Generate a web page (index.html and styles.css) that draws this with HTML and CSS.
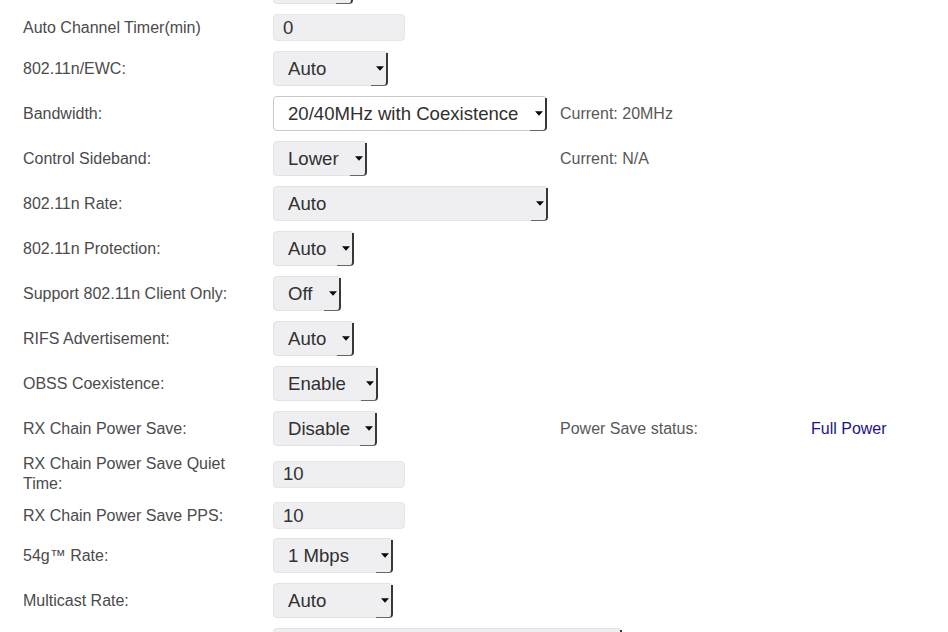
FILE: index.html
```html
<!DOCTYPE html>
<html lang="en">
<head>
<meta charset="utf-8">
<title>Wireless Advanced Settings</title>
<link rel="stylesheet" href="styles.css">
</head>
<body>
<form class="form">
  <div class="row">
    <label class="lbl"></label>
    <span class="sel w80"><select><option></option></select><svg class="arr" viewBox="0 0 7 4"><path d="M0 0H7L3.5 4Z"/></svg></span>
  </div>
  <div class="row">
    <label class="lbl">Auto Channel Timer(min)</label>
    <input class="txt" type="text" value="0">
  </div>
  <div class="row">
    <label class="lbl">802.11n/EWC:</label>
    <span class="sel w115"><select><option>Auto</option></select><svg class="arr" viewBox="0 0 7 4"><path d="M0 0H7L3.5 4Z"/></svg></span>
  </div>
  <div class="row">
    <label class="lbl">Bandwidth:</label>
    <span class="sel sel-white w274"><select><option>20/40MHz with Coexistence</option></select><svg class="arr" viewBox="0 0 7 4"><path d="M0 0H7L3.5 4Z"/></svg></span>
    <span class="info">Current: 20MHz</span>
  </div>
  <div class="row">
    <label class="lbl">Control Sideband:</label>
    <span class="sel w94"><select><option>Lower</option></select><svg class="arr" viewBox="0 0 7 4"><path d="M0 0H7L3.5 4Z"/></svg></span>
    <span class="info">Current: N/A</span>
  </div>
  <div class="row">
    <label class="lbl">802.11n Rate:</label>
    <span class="sel w275"><select><option>Auto</option></select><svg class="arr" viewBox="0 0 7 4"><path d="M0 0H7L3.5 4Z"/></svg></span>
  </div>
  <div class="row">
    <label class="lbl">802.11n Protection:</label>
    <span class="sel w81"><select><option>Auto</option></select><svg class="arr" viewBox="0 0 7 4"><path d="M0 0H7L3.5 4Z"/></svg></span>
  </div>
  <div class="row">
    <label class="lbl">Support 802.11n Client Only:</label>
    <span class="sel w68"><select><option>Off</option></select><svg class="arr" viewBox="0 0 7 4"><path d="M0 0H7L3.5 4Z"/></svg></span>
  </div>
  <div class="row">
    <label class="lbl">RIFS Advertisement:</label>
    <span class="sel w81"><select><option>Auto</option></select><svg class="arr" viewBox="0 0 7 4"><path d="M0 0H7L3.5 4Z"/></svg></span>
  </div>
  <div class="row">
    <label class="lbl">OBSS Coexistence:</label>
    <span class="sel w105"><select><option>Enable</option></select><svg class="arr" viewBox="0 0 7 4"><path d="M0 0H7L3.5 4Z"/></svg></span>
  </div>
  <div class="row">
    <label class="lbl">RX Chain Power Save:</label>
    <span class="sel w104"><select><option>Disable</option></select><svg class="arr" viewBox="0 0 7 4"><path d="M0 0H7L3.5 4Z"/></svg></span>
    <span class="info">Power Save status:</span>
    <span class="status">Full Power</span>
  </div>
  <div class="row row-tall">
    <label class="lbl">RX Chain Power Save Quiet Time:</label>
    <input class="txt" type="text" value="10">
  </div>
  <div class="row row-short">
    <label class="lbl">RX Chain Power Save PPS:</label>
    <input class="txt" type="text" value="10">
  </div>
  <div class="row">
    <label class="lbl">54g™ Rate:</label>
    <span class="sel w120"><select><option>1 Mbps</option></select><svg class="arr" viewBox="0 0 7 4"><path d="M0 0H7L3.5 4Z"/></svg></span>
  </div>
  <div class="row">
    <label class="lbl">Multicast Rate:</label>
    <span class="sel w120"><select><option>Auto</option></select><svg class="arr" viewBox="0 0 7 4"><path d="M0 0H7L3.5 4Z"/></svg></span>
  </div>
  <div class="row">
    <label class="lbl"></label>
    <span class="sel w349"><select><option></option></select><svg class="arr" viewBox="0 0 7 4"><path d="M0 0H7L3.5 4Z"/></svg></span>
  </div>
</form>
</body>
</html>
```
FILE: styles.css
```css
html, body {
  margin: 0;
  padding: 0;
  background: #ffffff;
  overflow: hidden;
}

body {
  font-family: "Liberation Sans", Arial, Helvetica, sans-serif;
  color: #4a4a4a;
}

.form {
  margin: -36px 0 0 0;
  padding: 0 0 0 23px;
}

.row {
  display: grid;
  grid-template-columns: 250px 287px 251px 1fr;
  align-items: center;
  padding: 5px 0;
}

.row-tall {
  padding: 3px 0;
}

.row-short {
  padding: 5px 0 4px;
}

.lbl {
  font-size: 16px;
  line-height: 20px;
  color: #4b4b4b;
  padding-right: 30px;
}

.info {
  font-size: 16px;
  line-height: 20px;
  color: #585858;
}

.status {
  font-size: 16px;
  line-height: 20px;
  color: #1c138c;
}

.txt {
  box-sizing: border-box;
  width: 132px;
  height: 27px;
  margin: 0;
  padding: 0 0 0 9px;
  border: 1px solid #e6e5e8;
  border-radius: 4px;
  background: #efeef0;
  font-family: "Liberation Sans", Arial, Helvetica, sans-serif;
  font-size: 18.6px;
  color: #333333;
  outline: none;
}

.sel {
  position: relative;
  display: inline-block;
  height: 35px;
}

.sel select {
  -webkit-appearance: none;
  appearance: none;
  box-sizing: border-box;
  width: 100%;
  height: 35px;
  margin: 0;
  padding: 0 0 0 14px;
  border: 1px solid #e2e1e4;
  border-radius: 4px;
  background: #efeef1;
  font-family: "Liberation Sans", Arial, Helvetica, sans-serif;
  font-size: 18.6px;
  color: #303030;
  outline: none;
}

.sel-white select {
  background: #ffffff;
  border-color: #c9c9cc;
}

.sel::after {
  content: "";
  position: absolute;
  top: 2px;
  right: 0;
  bottom: 0;
  width: 15px;
  border-right: 2px solid #383838;
  border-bottom: 1.5px solid #666666;
  border-bottom-right-radius: 4px;
  pointer-events: none;
}

.arr {
  position: absolute;
  right: 4px;
  top: 50%;
  width: 8px;
  height: 5px;
  margin-top: -2.5px;
  fill: #0a0a0a;
  pointer-events: none;
}

.w68 { width: 68px; }
.w80 { width: 80px; }
.w81 { width: 81px; }
.w94 { width: 94px; }
.w104 { width: 104px; }
.w105 { width: 105px; }
.w115 { width: 115px; }
.w120 { width: 120px; }
.w274 { width: 274px; }
.w275 { width: 275px; }
.w349 { width: 349px; }
```
